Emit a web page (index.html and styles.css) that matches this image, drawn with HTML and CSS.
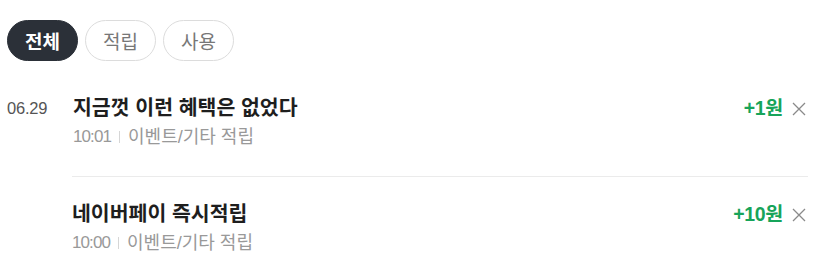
FILE: index.html
```html
<!DOCTYPE html>
<html lang="ko">
<head>
<meta charset="utf-8">
<link rel="stylesheet" href="styles.css">
</head>
<body>
<div class="page">
  <div class="tabs">
    <button class="tab tab-active">전체</button>
    <button class="tab">적립</button>
    <button class="tab">사용</button>
  </div>
  <ul class="list">
    <li class="row">
      <div class="date">06.29</div>
      <div class="body">
        <div class="title">지금껏 이런 혜택은 없었다</div>
        <div class="meta"><span class="time">10:01</span><span class="bar"></span><span class="kind">이벤트/기타 적립</span></div>
      </div>
      <div class="amount">+1원</div>
      <button class="close" aria-label="삭제"><svg width="14" height="14" viewBox="0 0 14 14"><path d="M1 1L13 13M13 1L1 13" stroke="#8a8a8a" stroke-width="1.3" fill="none"/></svg></button>
    </li>
    <li class="row">
      <div class="date"></div>
      <div class="body">
        <div class="title">네이버페이 즉시적립</div>
        <div class="meta"><span class="time">10:00</span><span class="bar"></span><span class="kind">이벤트/기타 적립</span></div>
      </div>
      <div class="amount">+10원</div>
      <button class="close" aria-label="삭제"><svg width="14" height="14" viewBox="0 0 14 14"><path d="M1 1L13 13M13 1L1 13" stroke="#8a8a8a" stroke-width="1.3" fill="none"/></svg></button>
    </li>
  </ul>
</div>
</body>
</html>
```
FILE: styles.css
```css
* { box-sizing: border-box; }
html, body { margin: 0; padding: 0; background: #fff; }
body { font-family: "Liberation Sans", "Noto Sans CJK KR", sans-serif; color: #222; }
.page { padding: 20px 11px 0 7px; }
.tabs { display: flex; gap: 7px; }
.tab {
  height: 41px; width: 71px; border-radius: 21px;
  border: 1px solid #dcdcdc; background: #fff; color: #777;
  font-family: "Liberation Sans", "Noto Sans CJK KR", sans-serif;
  font-size: 19px; padding: 0; cursor: pointer;
}
.tab-active { background: #2b3038; border-color: #2b3038; color: #fff; font-weight: 700; }
.list { list-style: none; margin: 0; padding: 0; }
.row { display: flex; align-items: flex-start; padding: 33px 0 27px; }
.row + .row { border-top: 1px solid #ebebeb; margin-left: 65px; padding-top: 23px; padding-bottom: 0; }
.row + .row .date { display: none; }
.date { width: 66px; flex: none; font-size: 16.5px; color: #555; letter-spacing: -0.2px; line-height: 28px; }
.body { flex: 1; }
.title { font-size: 20.5px; font-weight: 700; color: #1e1e1e; line-height: 28px; }
.meta { display: flex; align-items: center; margin-top: 3px; color: #999; line-height: 24px; }
.time { font-size: 17px; letter-spacing: -0.9px; }
.kind { font-size: 18px; }
.bar { width: 1px; height: 12px; background: #d6d6d6; margin: 0 8px; }
.amount { font-size: 19.5px; font-weight: 700; color: #17a45a; line-height: 28px; letter-spacing: -0.3px; }
.close { border: 0; background: none; padding: 0; margin: 8px 2px 0 9px; width: 14px; height: 14px; display: flex; cursor: pointer; }
```
